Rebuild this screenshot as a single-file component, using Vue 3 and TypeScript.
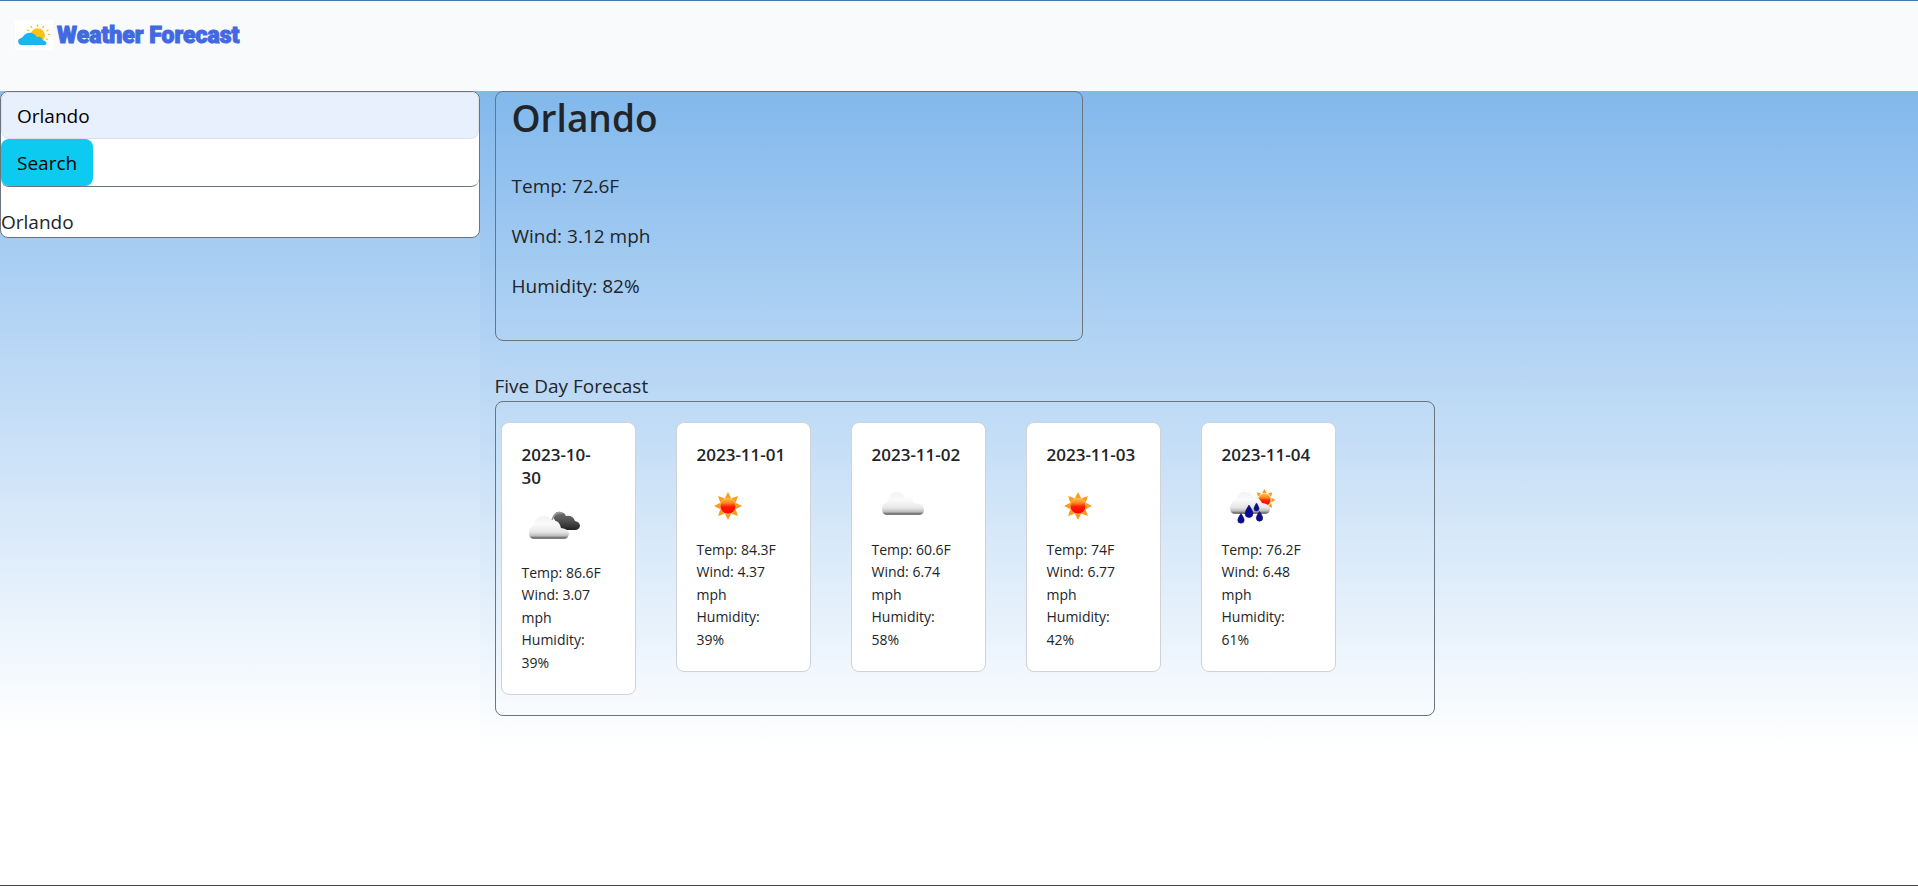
<script setup lang="ts">
import { ref } from 'vue'

type Kind = 'overcast' | 'sun' | 'cloud' | 'showers'
interface Day {
  date: string
  kind: Kind
  temp: string
  wind: string
  humidity: string
}

const query = ref('Orlando')
const city = ref('Orlando')
const searches = ref<string[]>(['Orlando'])

const days: Day[] = [
  { date: '2023-10-\n30', kind: 'overcast', temp: '86.6F', wind: '3.07 mph', humidity: '39%' },
  { date: '2023-11-01', kind: 'sun', temp: '84.3F', wind: '4.37 mph', humidity: '39%' },
  { date: '2023-11-02', kind: 'cloud', temp: '60.6F', wind: '6.74 mph', humidity: '58%' },
  { date: '2023-11-03', kind: 'sun', temp: '74F', wind: '6.77 mph', humidity: '42%' },
  { date: '2023-11-04', kind: 'showers', temp: '76.2F', wind: '6.48 mph', humidity: '61%' },
]

const rays = [0, 45, 90, 135, 180, 225, 270, 315]

function search() {
  const name = query.value.trim()
  if (!name) return
  city.value = name
  if (!searches.value.includes(name)) searches.value.push(name)
}
</script>

<template>
  <div class="page">
    <svg class="defs" width="0" height="0" aria-hidden="true">
      <defs>
        <linearGradient id="g-cloud" x1="0" y1="0" x2="0" y2="1">
          <stop offset="0" stop-color="#f1f1f1" />
          <stop offset="0.35" stop-color="#fbfbfb" />
          <stop offset="0.7" stop-color="#e6e6e6" />
          <stop offset="0.86" stop-color="#bdbdbd" />
          <stop offset="0.95" stop-color="#6e6e6e" />
          <stop offset="1" stop-color="#8a8a8a" />
        </linearGradient>
        <linearGradient id="g-dark" x1="0" y1="0" x2="0" y2="1">
          <stop offset="0" stop-color="#777" />
          <stop offset="0.5" stop-color="#505050" />
          <stop offset="1" stop-color="#222" />
        </linearGradient>
        <linearGradient id="g-sun" x1="0" y1="0" x2="0" y2="1">
          <stop offset="0" stop-color="#ffc04a" />
          <stop offset="0.3" stop-color="#ff8a1c" />
          <stop offset="0.55" stop-color="#ff1a05" />
          <stop offset="1" stop-color="#ff0000" />
        </linearGradient>
      </defs>
    </svg>

    <header class="header">
      <svg class="logo" viewBox="0 0 38 30" aria-hidden="true">
        <rect width="38" height="30" fill="#fff" />
        <g stroke="#ffc20e" stroke-width="1.4" stroke-linecap="round">
          <path d="M12.6 10.2l1.1.5M16 6.6l.8 1M22.5 5.2v1.2M28.6 6.6l-.8 1M33 10.2l-1.2.6M33.2 14.4h1.2M31.4 19l.9.5" />
        </g>
        <circle cx="22.6" cy="15.6" r="7.3" fill="#ffc20e" />
        <path d="M6 25a3.500 3.500 0 0 1-.4-6.800Q7.500 17.500 8 16.500A8 8 0 0 1 21.800 17a5.400 5.400 0 0 1 6 3.200Q31.500 21 31.500 23.500Q31 25 29.500 25z" fill="#1bb5ee" />
      </svg>
      <span class="brand">Weather Forecast</span>
    </header>

    <main class="main">
      <aside class="side">
        <div class="panel">
          <form class="search" @submit.prevent="search">
            <input v-model="query" class="field" type="text" aria-label="City" />
            <button class="btn" type="submit">Search</button>
          </form>
          <ul class="history">
            <li v-for="s in searches" :key="s">{{ s }}</li>
          </ul>
        </div>
      </aside>

      <section class="content">
        <article class="current">
          <h1>{{ city }}</h1>
          <p>Temp: 72.6F</p>
          <p>Wind: 3.12 mph</p>
          <p>Humidity: 82%</p>
        </article>

        <h2 class="label">Five Day Forecast</h2>
        <div class="forecast">
          <article v-for="d in days" :key="d.date" class="card">
            <h3>{{ d.date }}</h3>
            <svg class="icon" viewBox="0 0 64 64" aria-hidden="true">
              <g v-if="d.kind === 'overcast'" transform="translate(0 6)">
                <path d="M31 13Q33 7 39 8Q43 9 44 12Q51 11 53 17Q58 18 58 22Q57 26 53 26H39L34 18Z" fill="url(#g-dark)" />
                <path d="M30 16Q33 7 40 9" fill="none" stroke="#999" stroke-width="1.5" />
                <path d="M11 35Q7 34 7 29Q7 24 12 21Q13 13 21 12Q28 12 30 17Q37 15 39 24Q47 25 47 30Q46 35 42 35Z" fill="url(#g-cloud)" />
              </g>
              <g v-else-if="d.kind === 'cloud'" transform="translate(0 5)">
                <path d="M14 35Q10 34 10 29Q10 24 15 22Q17 13 24 12Q31 12 33 18Q39 15 42 23Q52 23 52 30Q52 34 48 35Z" fill="url(#g-cloud)" />
              </g>
              <g v-else-if="d.kind === 'sun'">
                <path v-for="a in rays" :key="a" d="M29 22l3-6 3 6z" :transform="`translate(-1 1) rotate(${a} 32 30)`" fill="#fb9a1c" />
                <circle cx="31" cy="31" r="8" fill="url(#g-sun)" stroke="#ffb347" stroke-width="0.8" />
              </g>
              <g v-else transform="translate(0 5)">
                <path v-for="a in rays" :key="a" d="M40.200 13l2.300-4 2.300 4z" :transform="`rotate(${a} 42.500 20)`" fill="#fb9a1c" />
                <circle cx="42.500" cy="20" r="6.200" fill="url(#g-sun)" stroke="#ffb347" stroke-width="0.8" />
                <path d="M12 34Q8 33 8 28Q8 22 14 20Q16 12 22 12Q29 12 32 18Q37 17 40 23Q48 24 48 29Q48 33 44 34Z" fill="url(#g-cloud)" />
                <g fill="#0a0a9c" stroke="#1a1a50" stroke-width="0.6">
                  <path d="M27 25q4 6 4 8.500a4 4 0 0 1-8 0Q23 31 27 25z" />
                  <path d="M34.500 23q2.500 4 2.500 5.500a2.500 2.500 0 0 1-5 0q0-1.500 2.500-5.500z" />
                  <path d="M19 33.500q3.200 4.500 3.200 6.500a3.200 3.200 0 0 1-6.400 0q0-2 3.200-6.500z" />
                  <path d="M37.500 31.500q3.200 4.500 3.200 6.500a3.200 3.200 0 0 1-6.400 0q0-2 3.200-6.500z" />
                </g>
              </g>
            </svg>
            <p>Temp: {{ d.temp }}</p>
            <p>Wind: {{ d.wind }}</p>
            <p>Humidity: {{ d.humidity }}</p>
          </article>
        </div>
      </section>
    </main>
  </div>
</template>

<style>
body {
  margin: 0;
}
</style>

<style scoped>
.page {
  box-sizing: border-box;
  min-height: 100vh;
  display: flex;
  flex-direction: column;
  border-top: 1px solid #4577b4;
  border-bottom: 1px solid #444;
  background: #fff;
  color: #212529;
  font-family: "Segoe UI", "Open Sans", "Noto Sans", sans-serif;
  font-size: 19px;
  line-height: 30px;
}
.page * {
  box-sizing: border-box;
}
.defs {
  position: absolute;
}
.header {
  display: flex;
  align-items: flex-start;
  gap: 4px;
  height: 90px;
  padding: 19px 15px;
  background: #f8fafc;
}
.logo {
  width: 38px;
  height: 30px;
}
.brand {
  color: #4169e1;
  font-family: Impact, Roboto, sans-serif;
  font-weight: 900;
  font-size: 23px;
  line-height: 32px;
  -webkit-text-stroke: 1px #4169e1;
}
.main {
  display: flex;
  align-items: stretch;
}
.side {
  width: 25%;
  background: linear-gradient(#8abcee, #fff 640px);
}
.panel {
  border: 1px solid #6c757d;
  border-radius: 8px;
  background: #fff;
}
.search {
  border-bottom: 1px solid #6c757d;
  border-radius: 8px;
}
.field {
  display: block;
  width: 100%;
  height: 47px;
  padding: 8px 15px;
  border: 1px solid #dee2e6;
  border-radius: 8px;
  background: #e8f0fe;
  color: #000;
  font: inherit;
}
.btn {
  display: block;
  height: 47px;
  padding: 8px 16px;
  border: 0;
  border-radius: 8px;
  background: #0dcaf0;
  color: #000;
  font: inherit;
}
.history {
  margin: 0;
  padding: 20px 0 0;
  list-style: none;
}
.content {
  width: 75%;
  padding: 0 15px 32px;
  background: linear-gradient(#82b8ec, #fff 656px);
}
.current {
  width: 41.8%;
  height: 250px;
  padding: 0 16px;
  border: 1px solid #6c757d;
  border-radius: 8px;
}
.current h1 {
  margin: 0 0 27px;
  font-size: 37px;
  font-weight: 600;
  line-height: 52px;
}
.current p {
  margin: 0 0 20px;
}
.label {
  margin: 30px 0 0;
  font-size: 19px;
  font-weight: 400;
}
.forecast {
  display: flex;
  align-items: flex-start;
  gap: 40px;
  width: 66.8%;
  padding: 20px 5px;
  border: 1px solid #6c757d;
  border-radius: 8px;
}
.card {
  width: 135px;
  padding: 20px;
  border: 1px solid #d0d3d6;
  border-radius: 8px;
  background: #fff;
  font-size: 14px;
  line-height: 1.6;
}
.card h3 {
  margin: 0 0 9px;
  font-size: 17px;
  font-weight: 600;
  line-height: 23px;
  white-space: pre-line;
}
.card p {
  margin: 0;
}
.icon {
  display: block;
  width: 64px;
  height: 64px;
}
</style>
